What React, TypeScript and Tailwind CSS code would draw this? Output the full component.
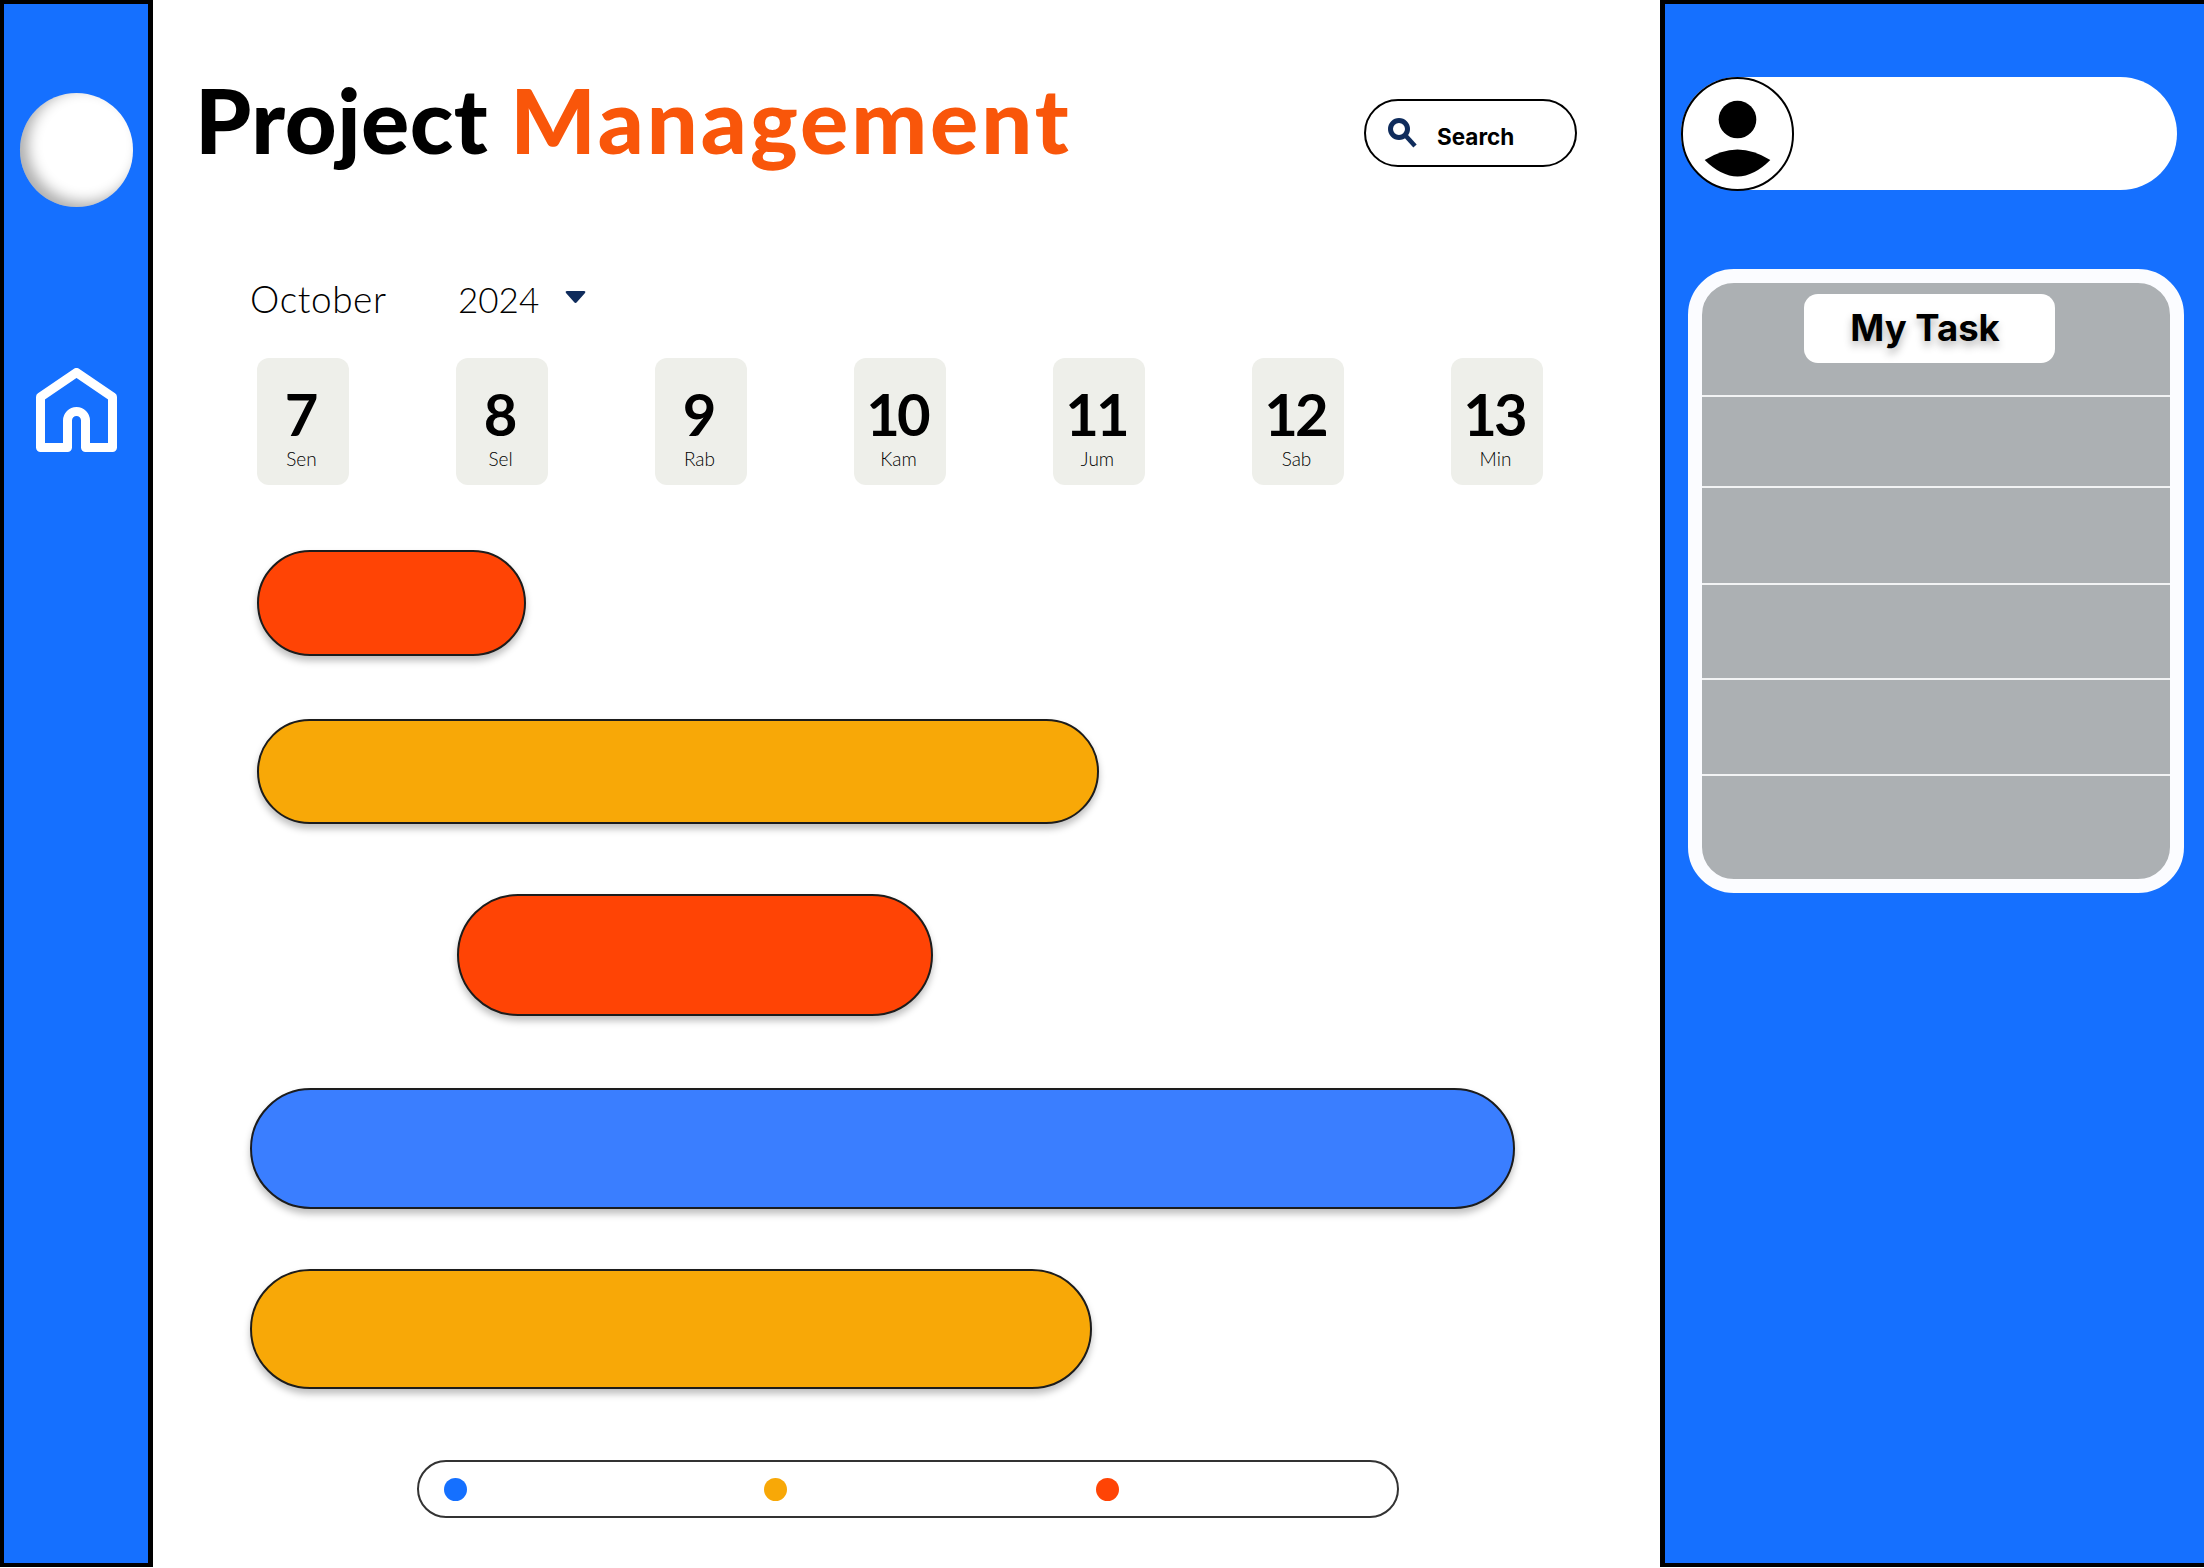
const days = [
  { num: "7", name: "Sen" },
  { num: "8", name: "Sel" },
  { num: "9", name: "Rab" },
  { num: "10", name: "Kam" },
  { num: "11", name: "Jum" },
  { num: "12", name: "Sab" },
  { num: "13", name: "Min" },
];

export default function App() {
  return (
    <div className="flex w-[2204px] h-[1567px] overflow-hidden bg-white text-black font-['Lato',sans-serif]">
      {/* left rail */}
      <aside className="w-[153px] shrink-0 border-4 border-r-[5px] border-black bg-[#1570ff] flex flex-col items-center">
        <div className="mt-[89px] w-[113px] h-[114px] rounded-full bg-white shadow-[inset_8px_-5px_14px_rgba(0,0,0,0.32)]" />
        <svg className="mt-[161px]" width="81" height="84" viewBox="0 0 81 84" fill="none" stroke="white" strokeWidth="9" strokeLinejoin="round">
          <path d="M31.5 79.5H4.5V29L40.5 4.5L76.5 29V79.5H49.5V52.5a9 9 0 0 0-18 0V79.5Z" />
        </svg>
      </aside>

      {/* main */}
      <main className="flex-1 flex flex-col">
        <div className="h-[270px] flex items-start justify-between">
          <h1 className="ml-[42px] mt-[64px] text-[90px] leading-[110px] font-black tracking-[0.500px] whitespace-nowrap">
            Project <span className="text-[#f9560a] tracking-[3px]">Management</span>
          </h1>
          <div className="mt-[99px] mr-[83px] w-[213px] h-[68px] rounded-[34px] border-2 border-black flex items-center">
            <svg className="ml-[22px]" width="30" height="30" viewBox="0 0 30 30" fill="none" stroke="#0f2c5c">
              <circle cx="11" cy="11" r="8.500" strokeWidth="5" />
              <path d="M17 17L27 28" strokeWidth="4.500" />
            </svg>
            <span className="ml-[19px] mt-[8px] text-[22.500px] font-bold font-['Inter',sans-serif]">Search</span>
          </div>
        </div>

        <div className="h-[58px] flex items-center ml-[97px] font-light">
          <span className="w-[208px] text-[37px] tracking-[0.600px]">October</span>
          <span className="w-[107px] text-[35px]">2024</span>
          <svg width="21" height="14" viewBox="0 0 21 14" className="mb-[5px]">
            <path d="M2 1H19Q21 1 20 3L12 12Q10.500 14 9 12L1 3Q0 1 2 1Z" fill="#0f2c5c" />
          </svg>
        </div>

        <div className="mt-[30px] ml-[104px] flex gap-[107px]">
          {days.map((d) => (
            <div key={d.num} className="w-[92px] h-[127px] rounded-[12px] bg-[#eeefea] flex flex-col items-center pr-[3px]">
              <span className="mt-[25px] mr-[3px] text-[58px] leading-[62px] font-bold tracking-[-3px]">{d.num}</span>
              <span className="mt-[3px] text-[19px] leading-[22px] font-light">{d.name}</span>
            </div>
          ))}
        </div>

        <div className="mt-[65px] ml-[104px] w-[269px] h-[106px] rounded-full border-2 border-[#1c1c1c] bg-[#ff4405] shadow-[0_5px_7px_rgba(0,0,0,0.25)]" />
        <div className="mt-[63px] ml-[104px] w-[842px] h-[105px] rounded-full border-2 border-[#1c1c1c] bg-[#f8a807] shadow-[0_5px_7px_rgba(0,0,0,0.25)]" />
        <div className="mt-[70px] ml-[304px] w-[476px] h-[122px] rounded-full border-2 border-[#1c1c1c] bg-[#ff4405] shadow-[0_5px_7px_rgba(0,0,0,0.25)]" />
        <div className="mt-[72px] ml-[97px] w-[1265px] h-[121px] rounded-full border-2 border-[#1c1c1c] bg-[#3a7eff] shadow-[0_5px_7px_rgba(0,0,0,0.25)]" />
        <div className="mt-[60px] ml-[97px] w-[842px] h-[120px] rounded-full border-2 border-[#1c1c1c] bg-[#f8a807] shadow-[0_5px_7px_rgba(0,0,0,0.25)]" />

        <div className="mt-[71px] ml-[264px] w-[982px] h-[58px] rounded-[29px] border-2 border-[#333333] flex items-center">
          <span className="ml-[25px] w-[23px] h-[23px] rounded-full bg-[#1570ff]" />
          <span className="ml-[297px] w-[23px] h-[23px] rounded-full bg-[#f8a807]" />
          <span className="ml-[309px] w-[23px] h-[23px] rounded-full bg-[#ff4405]" />
        </div>
      </main>

      {/* right panel */}
      <aside className="w-[544px] shrink-0 border-l-[5px] border-y-4 border-black bg-[#1570ff] flex flex-col">
        <div className="mt-[73px] ml-[16px] w-[496px] h-[113px] rounded-full bg-white">
          <div className="w-[113px] h-[114px] rounded-full border-2 border-black bg-white">
            <svg width="109" height="110" viewBox="0 0 112 114" fill="black">
              <circle cx="56" cy="42" r="19.500" />
              <path d="M22 84Q56 62 90 84Q56 118 22 84Z" />
            </svg>
          </div>
        </div>

        <div className="mt-[79px] ml-[23px] w-[496px] h-[624px] rounded-[46px] border-[14px] border-[#fbfcff] bg-[#acb0b3] flex flex-col">
          <div className="h-[114px] flex justify-center items-start border-b-2 border-[#f2f3f4]">
            <div className="mt-[11px] mr-[14px] w-[251px] h-[69px] rounded-[14px] bg-white flex items-center justify-center">
              <span className="mr-[8px] text-[36.500px] font-bold font-['Inter',sans-serif] [text-shadow:0_5px_8px_rgba(0,0,0,0.3)]">My Task</span>
            </div>
          </div>
          <div className="h-[91px] border-b-2 border-[#f2f3f4]" />
          <div className="h-[97px] border-b-2 border-[#f2f3f4]" />
          <div className="h-[95px] border-b-2 border-[#f2f3f4]" />
          <div className="h-[96px] border-b-2 border-[#f2f3f4]" />
        </div>
      </aside>
    </div>
  );
}
